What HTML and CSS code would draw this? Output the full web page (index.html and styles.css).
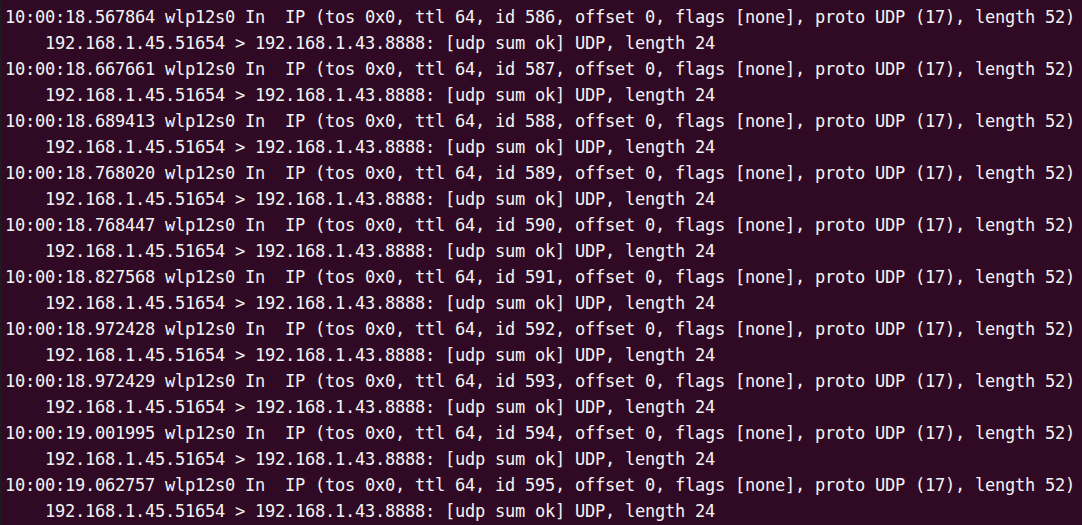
FILE: index.html
```html
<!DOCTYPE html>
<html>
<head>
<meta charset="utf-8">
<link rel="stylesheet" href="styles.css">
</head>
<body>
<div class="term">
<pre class="out">10:00:18.567864 wlp12s0 In  IP (tos 0x0, ttl 64, id 586, offset 0, flags [none], proto UDP (17), length 52)
    192.168.1.45.51654 &gt; 192.168.1.43.8888: [udp sum ok] UDP, length 24
10:00:18.667661 wlp12s0 In  IP (tos 0x0, ttl 64, id 587, offset 0, flags [none], proto UDP (17), length 52)
    192.168.1.45.51654 &gt; 192.168.1.43.8888: [udp sum ok] UDP, length 24
10:00:18.689413 wlp12s0 In  IP (tos 0x0, ttl 64, id 588, offset 0, flags [none], proto UDP (17), length 52)
    192.168.1.45.51654 &gt; 192.168.1.43.8888: [udp sum ok] UDP, length 24
10:00:18.768020 wlp12s0 In  IP (tos 0x0, ttl 64, id 589, offset 0, flags [none], proto UDP (17), length 52)
    192.168.1.45.51654 &gt; 192.168.1.43.8888: [udp sum ok] UDP, length 24
10:00:18.768447 wlp12s0 In  IP (tos 0x0, ttl 64, id 590, offset 0, flags [none], proto UDP (17), length 52)
    192.168.1.45.51654 &gt; 192.168.1.43.8888: [udp sum ok] UDP, length 24
10:00:18.827568 wlp12s0 In  IP (tos 0x0, ttl 64, id 591, offset 0, flags [none], proto UDP (17), length 52)
    192.168.1.45.51654 &gt; 192.168.1.43.8888: [udp sum ok] UDP, length 24
10:00:18.972428 wlp12s0 In  IP (tos 0x0, ttl 64, id 592, offset 0, flags [none], proto UDP (17), length 52)
    192.168.1.45.51654 &gt; 192.168.1.43.8888: [udp sum ok] UDP, length 24
10:00:18.972429 wlp12s0 In  IP (tos 0x0, ttl 64, id 593, offset 0, flags [none], proto UDP (17), length 52)
    192.168.1.45.51654 &gt; 192.168.1.43.8888: [udp sum ok] UDP, length 24
10:00:19.001995 wlp12s0 In  IP (tos 0x0, ttl 64, id 594, offset 0, flags [none], proto UDP (17), length 52)
    192.168.1.45.51654 &gt; 192.168.1.43.8888: [udp sum ok] UDP, length 24
10:00:19.062757 wlp12s0 In  IP (tos 0x0, ttl 64, id 595, offset 0, flags [none], proto UDP (17), length 52)
    192.168.1.45.51654 &gt; 192.168.1.43.8888: [udp sum ok] UDP, length 24</pre>
</div>
</body>
</html>
```
FILE: styles.css
```css
html, body {
  margin: 0;
  padding: 0;
  background: #300a24;
  height: 100%;
  overflow: hidden;
}
.term {
  box-sizing: border-box;
  height: 100%;
  border-left: 2px solid #1c1a1c;
  padding: 4px 0 0 3px;
}
.out {
  margin: 0;
  font-family: "DejaVu Sans Mono", "Liberation Mono", monospace;
  font-size: 17px;
  letter-spacing: -0.235px;
  line-height: 26px;
  color: #f4f4f4;
  white-space: pre;
}
```
